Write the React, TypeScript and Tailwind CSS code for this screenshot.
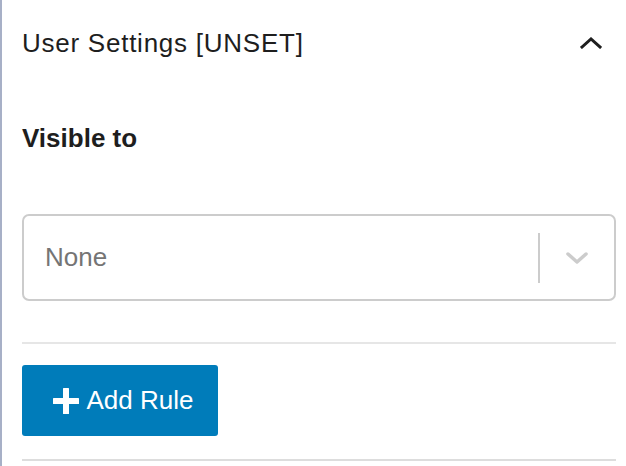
function ChevronUp() {
    return (
        <svg width="22" height="12" viewBox="0 0 22 12" fill="none">
            <path d="M2 10 L11 2 L20 10" stroke="#1e1e1e" strokeWidth="3" strokeLinecap="square" />
        </svg>
    );
}

function ChevronDown() {
    return (
        <svg width="24" height="14" viewBox="0 0 24 14" fill="none">
            <path d="M3 3 L12 11 L21 3" stroke="#cccccc" strokeWidth="3.5" strokeLinecap="round" strokeLinejoin="round" />
        </svg>
    );
}

function PlusIcon() {
    return (
        <svg width="26" height="26" viewBox="0 0 26 26" fill="white">
            <rect x="10" y="0" width="6" height="26" rx="0.5" />
            <rect x="0" y="10" width="26" height="6" rx="0.5" />
        </svg>
    );
}

export default function App() {
    return (
        <div
            className="w-[626px] h-[466px] bg-white border-l-2 border-[#a7b0c7] overflow-hidden"
            style={{ fontFamily: '"Liberation Sans", Arial, sans-serif' }}
        >
            <div className="pl-[20px] pr-[10px]">
                <div className="flex items-center justify-between h-[86px] pr-[14px]">
                    <span className="text-[26px] tracking-[0.75px] text-[#1e1e1e]">User Settings [UNSET]</span>
                    <ChevronUp />
                </div>

                <div className="mt-[38px] text-[26px] font-bold text-[#1e1e1e] leading-[28px]">
                    Visible to
                </div>

                <div className="mt-[62px] h-[87px] border-2 border-[#cccccc] rounded-[7px] flex items-center">
                    <span className="flex-1 pl-[21px] text-[26px] text-[#757575]">None</span>
                    <div className="w-[2px] h-[50px] bg-[#cccccc]" />
                    <div className="w-[74px] flex items-center justify-center">
                        <ChevronDown />
                    </div>
                </div>

                <div className="mt-[41px] h-[2px] bg-[#e6e6e6]" />

                <button className="mt-[21px] h-[71px] w-[196px] bg-[#007cba] rounded-[3px] flex items-center justify-center gap-[8px] pl-[6px] text-white text-[26px]">
                    <PlusIcon />
                    <span>Add Rule</span>
                </button>

                <div className="mt-[23px] h-[2px] bg-[#dddddd]" />
            </div>
        </div>
    );
}
